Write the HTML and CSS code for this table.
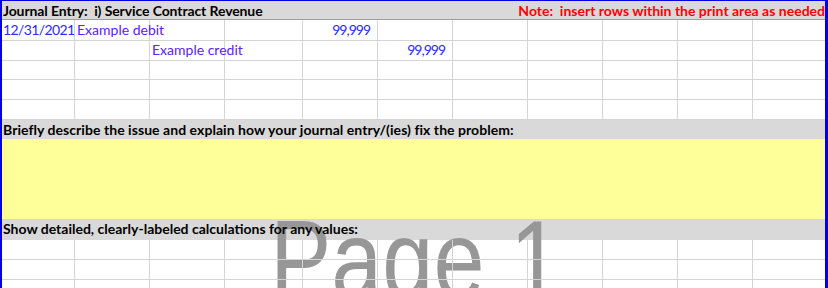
FILE: index.html
```html
<!DOCTYPE html>
<html>
<head>
<meta charset="utf-8">
<link rel="stylesheet" href="styles.css">
</head>
<body>
<div class="sheet">
  <div class="watermark">Page 1</div>
  <div class="hdr">
    <span class="title">Journal Entry:  i) Service Contract Revenue</span>
    <span class="note">Note:  insert rows within the print area as needed</span>
  </div>
  <div class="row">
    <div class="c date">12/31/2021</div><div class="c txt">Example debit</div><div class="c"></div><div class="c"></div><div class="c num">99,999</div><div class="c"></div><div class="c"></div><div class="c"></div><div class="c"></div><div class="c"></div><div class="c"></div>
  </div>
  <div class="row">
    <div class="c"></div><div class="c"></div><div class="c txt">Example credit</div><div class="c"></div><div class="c"></div><div class="c num">99,999</div><div class="c"></div><div class="c"></div><div class="c"></div><div class="c"></div><div class="c"></div>
  </div>
  <div class="row">
    <div class="c"></div><div class="c"></div><div class="c"></div><div class="c"></div><div class="c"></div><div class="c"></div><div class="c"></div><div class="c"></div><div class="c"></div><div class="c"></div><div class="c"></div>
  </div>
  <div class="row">
    <div class="c"></div><div class="c"></div><div class="c"></div><div class="c"></div><div class="c"></div><div class="c"></div><div class="c"></div><div class="c"></div><div class="c"></div><div class="c"></div><div class="c"></div>
  </div>
  <div class="row">
    <div class="c"></div><div class="c"></div><div class="c"></div><div class="c"></div><div class="c"></div><div class="c"></div><div class="c"></div><div class="c"></div><div class="c"></div><div class="c"></div><div class="c"></div>
  </div>
  <div class="band band1"><span class="btxt">Briefly describe the issue and explain how your journal entry/(ies) fix the problem:</span></div>
  <div class="fill"></div>
  <div class="band band2"><span class="btxt">Show detailed, clearly-labeled calculations for any values:</span></div>
  <div class="row">
    <div class="c"></div><div class="c"></div><div class="c"></div><div class="c"></div><div class="c"></div><div class="c"></div><div class="c"></div><div class="c"></div><div class="c"></div><div class="c"></div><div class="c"></div>
  </div>
  <div class="row">
    <div class="c"></div><div class="c"></div><div class="c"></div><div class="c"></div><div class="c"></div><div class="c"></div><div class="c"></div><div class="c"></div><div class="c"></div><div class="c"></div><div class="c"></div>
  </div>
  <div class="row">
    <div class="c"></div><div class="c"></div><div class="c"></div><div class="c"></div><div class="c"></div><div class="c"></div><div class="c"></div><div class="c"></div><div class="c"></div><div class="c"></div><div class="c"></div>
  </div>
</div>
</body>
</html>
```
FILE: styles.css
```css
html, body {
  margin: 0;
  padding: 0;
  background: #ffffff;
}
body {
  width: 828px;
  height: 288px;
  overflow: hidden;
  font-family: Lato, "Liberation Sans", sans-serif;
  font-size: 14px;
  color: #000;
}
.sheet {
  position: relative;
  width: 828px;
  height: 288px;
  overflow: hidden;
  box-sizing: border-box;
  border-left: 2px solid #0000e6;
  border-top: 1px solid #0000e6;
  border-right: 3px solid #0000e6;
}
.watermark {
  position: absolute;
  left: 268px;
  top: 203px;
  font-family: "Liberation Sans", Arial, sans-serif;
  font-size: 112px;
  line-height: 1;
  color: #979797;
  transform: scaleX(0.82);
  transform-origin: left top;
  white-space: pre;
  z-index: 0;
}
.hdr {
  display: flex;
  justify-content: space-between;
  height: 18px;
  line-height: 19px;
  background: #d9d9d9;
  border-bottom: 1px solid #a0a0a0;
  font-weight: bold;
  white-space: pre;
}
.title {
  padding-left: 1px;
  letter-spacing: -0.1px;
}
.note {
  color: #ff0000;
}
.row {
  position: relative;
  z-index: 1;
  display: grid;
  grid-template-columns: 73px 75px 75px 78px 75px 75px 75px 75px 75px 75px 72px;
  height: 20px;
}
.c {
  box-sizing: border-box;
  border-right: 1px solid #d4d4d4;
  border-bottom: 1px solid #d4d4d4;
  line-height: 20px;
  white-space: nowrap;
  overflow: visible;
}
.c:last-child {
  border-right: none;
}
.date {
  color: #2a2aff;
  padding-left: 1px;
  letter-spacing: -0.6px;
}
.txt {
  color: #5a22ff;
  padding-left: 2px;
}
.num {
  color: #2a2aff;
  text-align: right;
  padding-right: 7px;
  letter-spacing: -1px;
}
.band {
  background: #d9d9d9;
  font-weight: bold;
  white-space: pre;
}
.band1 {
  height: 19px;
  line-height: 20px;
  letter-spacing: 0.05px;
}
.band2 {
  height: 21px;
  line-height: 19px;
}
.btxt {
  position: relative;
  z-index: 1;
  padding-left: 1px;
}
.fill {
  height: 80px;
  background: #ffff99;
}
```
